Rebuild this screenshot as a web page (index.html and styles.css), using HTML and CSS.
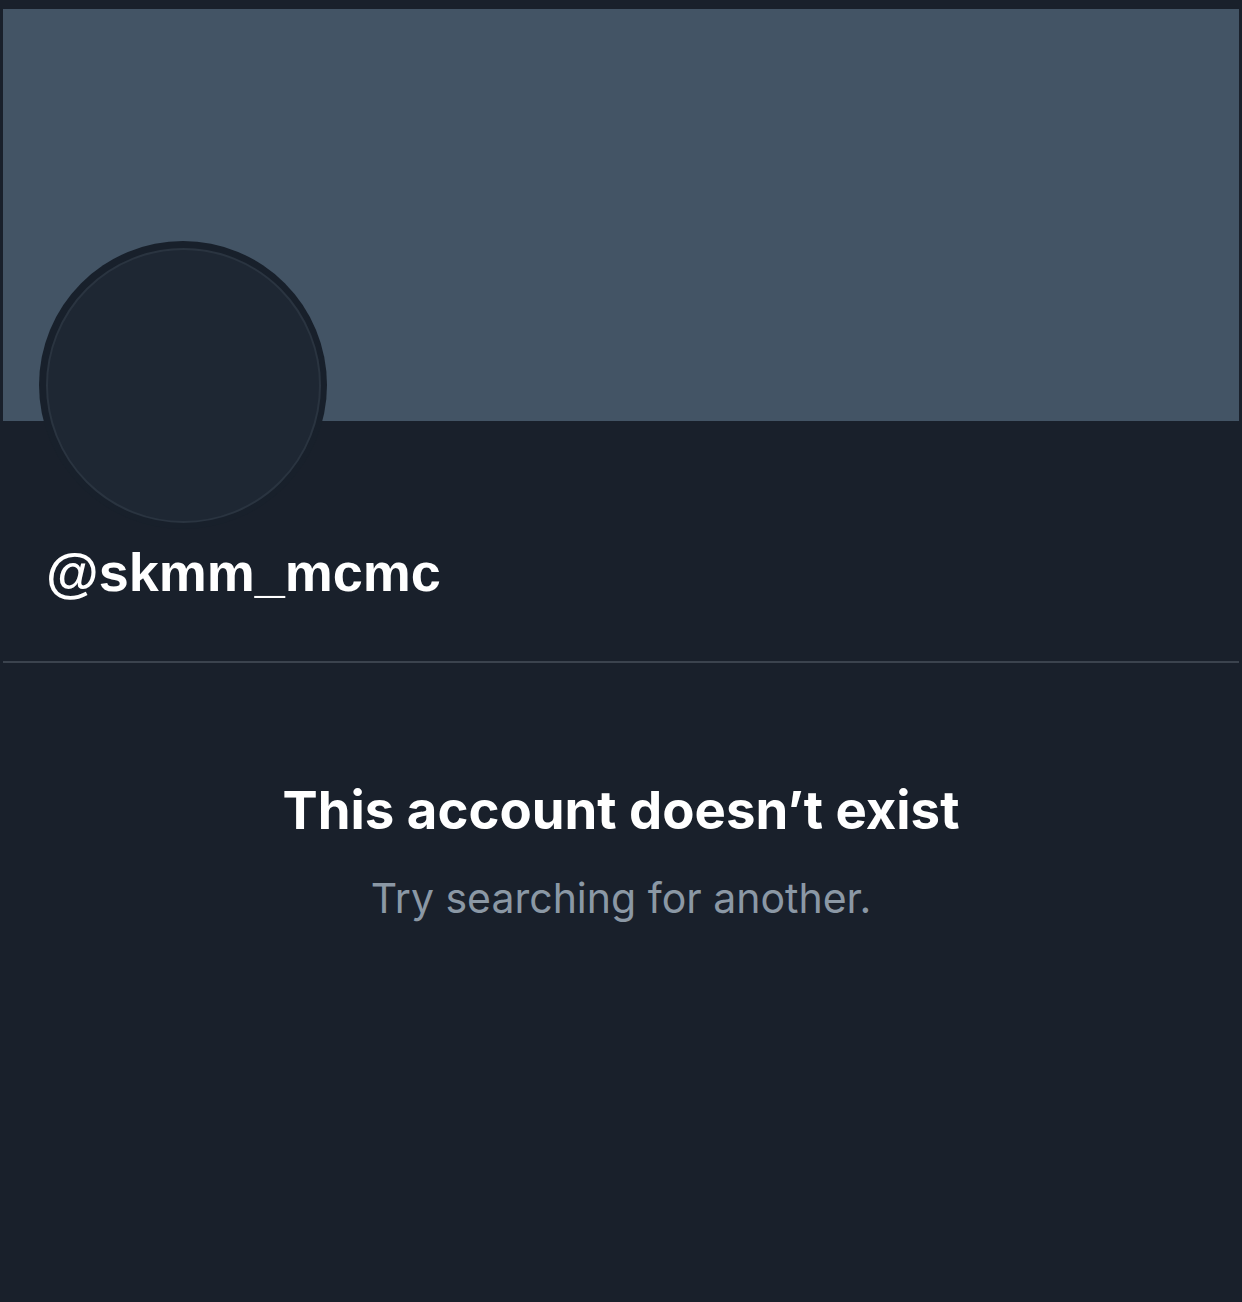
FILE: index.html
```
<!DOCTYPE html>
<html lang="en">
<head>
  <meta charset="UTF-8" />
  <meta name="viewport" content="width=device-width, initial-scale=1" />
  <title>@skmm_mcmc</title>
  <link rel="stylesheet" href="styles.css">
</head>
<body>
  <div class="profile">
    <div class="banner"></div>

    <div class="avatar">
      <div class="avatar-inner"></div>
    </div>

    <div class="handle">@skmm_mcmc</div>

    <div class="divider"></div>

    <div class="empty-state">
      <h2 class="empty-title">This account doesn’t exist</h2>
      <p class="empty-text">Try searching for another.</p>
    </div>
  </div>
</body>
</html>
```

FILE: styles.css
```
body, html {
  margin: 0;
  padding: 0;
  height: 100%;
  overflow: hidden;
  background: #19202b;
  color: #ffffff;
}

.profile {
  padding: 9px 3px 0 3px;
}

.banner {
  height: 412px;
  background: #435465;
}

.avatar {
  width: 288px;
  height: 288px;
  margin-top: -180px;
  margin-left: 36px;
  border-radius: 50%;
  background: #18202b;
  display: flex;
  align-items: center;
  justify-content: center;
}

.avatar-inner {
  width: 275px;
  height: 275px;
  border-radius: 50%;
  background: #1e2733;
  border: 2px solid #2a3440;
  box-sizing: border-box;
}

.handle {
  font-family: "Liberation Sans", Arial, sans-serif;
  font-weight: 700;
  font-size: 54px;
  line-height: 64px;
  margin-top: 11px;
  padding-left: 43px;
}

.divider {
  height: 2px;
  margin-top: 57px;
  background: #3b434e;
}

.empty-state {
  text-align: center;
  font-family: Inter, Roboto, sans-serif;
}

.empty-title {
  margin: 116px 0 0 0;
  font-size: 52.7px;
  line-height: 62px;
  font-weight: 700;
}

.empty-text {
  margin: 32px 0 0 0;
  font-size: 41px;
  line-height: 50px;
  color: #8b98a5;
}
```
